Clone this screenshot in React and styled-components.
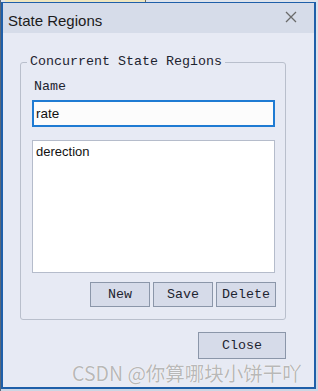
import styled, { createGlobalStyle } from "styled-components"

const GlobalStyle = createGlobalStyle`
  html, body {
    margin: 0;
    padding: 0;
    background: #dfe4ec;
  }
  * {
    box-sizing: border-box;
  }
`

const Screen = styled.div`
  width: 318px;
  height: 391px;
  overflow: hidden;
  background: linear-gradient(#dfe4ec, #cdd6e4);
  border-left: 1px solid #56677d;
`

const TopStrip = styled.div`
  height: 2px;
  display: flex;
  padding-left: 4px;

  & span {
    width: 141px;
    background: #efe6bf;
    border-right: 1px solid #6c6a5a;
  }
`

const Window = styled.div`
  width: 315px;
  border: 2px solid #1f5fa9;
  border-top-width: 1px;
  background: #e7eaf4;
  position: relative;
`

const TitleBar = styled.div`
  height: 30px;
  display: flex;
  align-items: center;
  justify-content: space-between;
  padding: 4px 17px 0 5px;
  background: #d6dce9;
  font-family: "Liberation Sans", Arial, sans-serif;
  font-size: 15px;
  color: #1b1b1b;
`

const CloseIcon = styled.svg`
  width: 12px;
  height: 12px;
  margin-top: -7px;

  & path {
    stroke: #6a6a6a;
    stroke-width: 1.3;
  }
`

const Body = styled.div`
  padding: 21px 28px 28px 17px;
  display: flex;
  flex-direction: column;
  align-items: flex-end;
  font-family: "Liberation Mono", "Courier New", monospace;
  font-size: 13.33px;
  color: #1d2430;
`

const Group = styled.fieldset`
  margin: 0;
  width: 266px;
  min-inline-size: 0;
  border: 1px solid #b9bfcc;
  border-radius: 3px;
  padding: 9px 10px 12px 11px;
  display: flex;
  flex-direction: column;
`

const Legend = styled.legend`
  padding: 0 3px;
  margin-left: -5px;
  line-height: 16px;
`

const FieldLabel = styled.div`
  line-height: 16px;
  padding-left: 2px;
  margin-bottom: 5px;
`

const TextBox = styled.div`
  height: 27px;
  border: 2px solid #1f7bd3;
  background: #fcfcfc;
  padding: 0 2px;
  display: flex;
  align-items: center;
  font-family: "Liberation Sans", Arial, sans-serif;
  font-size: 13.5px;
  color: #111;
`

const ListBox = styled.div`
  margin-top: 13px;
  height: 133px;
  border: 1px solid #b5bccb;
  background: #ffffff;
  padding: 3px 3px;
  font-family: "Liberation Sans", Arial, sans-serif;
  font-size: 13px;
  color: #111;
  line-height: 16px;
`

const ButtonRow = styled.div`
  margin-top: 9px;
  display: flex;
  justify-content: flex-end;
  gap: 3px;
  margin-right: -1px;
`

const Button = styled.div`
  width: ${({ $w }) => $w || 60}px;
  height: ${({ $h }) => $h || 25}px;
  background: #d6dbe9;
  border: 1px solid #8b96a9;
  display: flex;
  align-items: center;
  justify-content: center;
  line-height: 16px;
  color: #1d2430;
`

const CloseButton = styled(Button)`
  margin-top: 12px;
`

const Watermark = styled.div`
  position: absolute;
  left: 69px;
  bottom: 0px;
  font-family: "Noto Sans CJK SC", "Noto Sans", sans-serif;
  font-size: 19.5px;
  color: #b8b8b8;
  text-shadow: 0 0 1px #ffffff, 0 0 1px #ffffff;
  white-space: nowrap;
  line-height: 28px;
`

export default function App () {
  return (
    <>
      <GlobalStyle />
      <Screen>
        <TopStrip><span /></TopStrip>
        <Window>
          <TitleBar>
            <span>State Regions</span>
            <CloseIcon viewBox="0 0 12 12">
              <path d="M1 1L11 11M11 1L1 11" fill="none" />
            </CloseIcon>
          </TitleBar>
          <Body>
            <Group>
              <Legend>Concurrent State Regions</Legend>
              <FieldLabel>Name</FieldLabel>
              <TextBox>rate</TextBox>
              <ListBox>derection</ListBox>
              <ButtonRow>
                <Button>New</Button>
                <Button>Save</Button>
                <Button>Delete</Button>
              </ButtonRow>
            </Group>
            <CloseButton $w={88} $h={27}>Close</CloseButton>
          </Body>
          <Watermark>CSDN @你算哪块小饼干吖</Watermark>
        </Window>
      </Screen>
    </>
  )
}
